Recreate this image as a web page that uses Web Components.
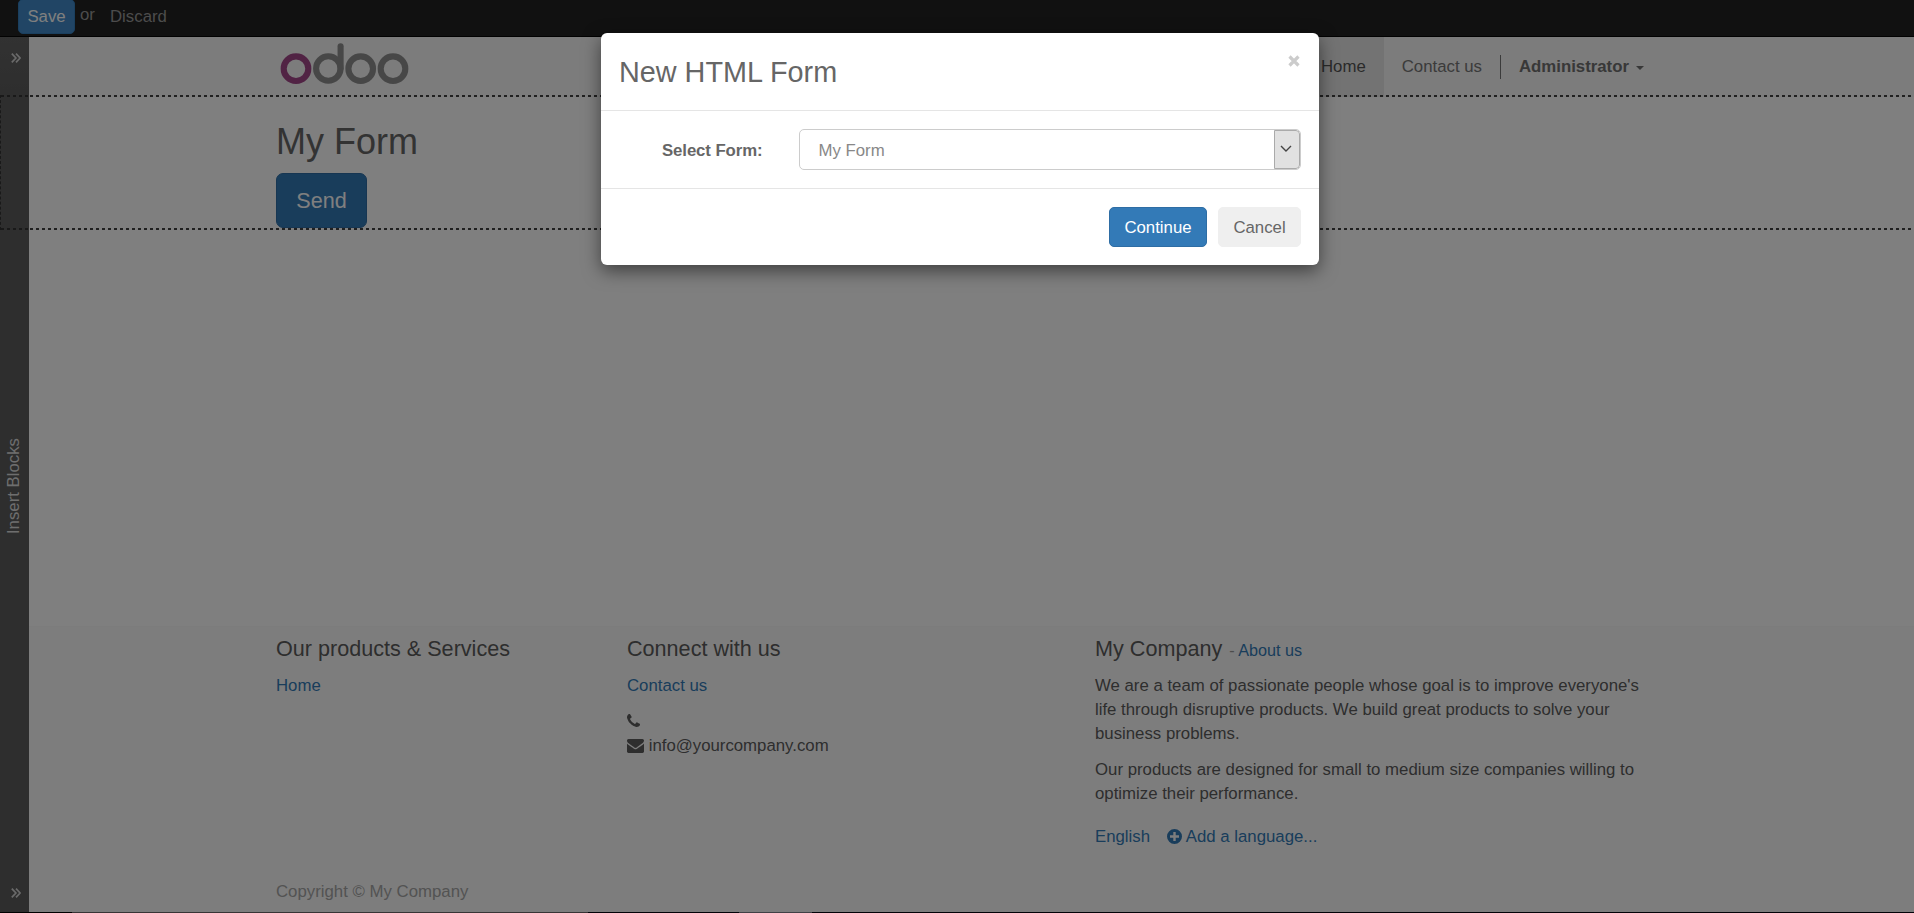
<!DOCTYPE html>
<html lang="en">
<head>
<meta charset="utf-8">
<title>My Form</title>
<style>
html,body{margin:0;height:913px;overflow:hidden}
body{font-family:"Liberation Sans",Arial,sans-serif;font-size:16.8px;line-height:24px;color:#666}
</style>
</head>
<body>
<site-page></site-page>
<script>
function define(name, html){
  const t=document.createElement('template');
  t.innerHTML=html;
  customElements.define(name,class extends HTMLElement{
    constructor(){super();this.attachShadow({mode:'open'}).append(t.content.cloneNode(true));}
  });
}

define('ui-button',`<style>
:host{display:inline-flex;box-sizing:border-box;align-items:center;justify-content:center;height:40px;border:1px solid #2e6da4;border-radius:5px;background:#337ab7;color:#fff;white-space:nowrap}
:host([kind=large]){width:91px;height:55px;border-radius:7px;font-size:21.6px}
:host([kind=save]){width:57px;height:35px;border-color:#357ebd;background:#428bca;color:#fff}
:host([kind=plain]){border-color:#efefef;background:#efefef;color:#666}
</style><slot></slot>`);

define('top-bar',`<style>
:host{display:flex;height:36px;background:#222;border-bottom:1px solid #040404;padding-left:18px;color:#999;align-items:flex-start;flex:none}
ui-button{margin-top:-1px}
.or{margin:3px 0 0 5px;width:30px}
.discard{margin-top:5px}
</style><ui-button kind="save">Save</ui-button><span class="or">or</span><span class="discard">Discard</span>`);

define('chevron-icon',`<style>:host{display:block;width:10px;height:10px}svg{display:block}</style>
<svg width="10" height="10" viewBox="0 0 10 10" fill="none" stroke="#d4d4d4" stroke-width="1.7"><path d="M.8.7 4.900 5 .8 9.300M5 .7 9.100 5 5 9.300"/></svg>`);

define('blocks-bar',`<style>
:host{display:flex;flex-direction:column;align-items:center;justify-content:space-between;box-sizing:border-box;width:29px;height:100%;background:linear-gradient(#646464,#5c5c5c 60px);padding:16px 0 14px 3px}
span{writing-mode:vertical-rl;transform:rotate(180deg);color:#ddd;font-size:16.8px;line-height:24px;margin:21px 5px 0 0}
</style><chevron-icon></chevron-icon><span>Insert Blocks</span><chevron-icon></chevron-icon>`);

define('odoo-logo',`<style>:host{display:block}svg{display:block}</style>
<svg width="132" height="46" viewBox="0 0 132 46" fill="none" stroke-width="6.1">
<circle cx="18" cy="27.700" r="12.300" stroke="#a24689"/>
<g stroke="#8f8f8f"><circle cx="50.300" cy="27.500" r="12.200"/><path d="M62.600 27.500V5.200" stroke-linecap="round"/>
<circle cx="82.700" cy="27.700" r="12.300"/><circle cx="115" cy="27.700" r="12.300"/></g></svg>`);

define('site-header',`<style>
:host{display:flex;height:60px;background:#f8f8f8;box-sizing:border-box;padding:0 270px 0 278px;justify-content:space-between;flex:none}
odoo-logo{margin-top:4px}
nav{display:flex;color:#777;height:60px;align-items:center}
.home{background:#e7e7e7;color:#555;height:100%;padding:0 18px;display:flex;align-items:center}
.contact{padding:0 18px}
.user{display:flex;align-items:center;border-left:1px solid #777;height:24px;padding-left:18px;color:#707070;font-weight:bold}
i{border:4px solid transparent;border-top-color:#707070;border-bottom:0;margin:2px 0 0 7px}
</style><odoo-logo></odoo-logo><nav><span class="home">Home</span><span class="contact">Contact us</span><span class="user">Administrator<i></i></span></nav>`);

define('form-section',`<style>
:host{display:block;box-sizing:border-box;height:135px;margin-top:-2px;padding:27px 0 0 276px;flex:none;
background:repeating-linear-gradient(90deg,#404040 0 3px,transparent 3px 6px) 0 0/100% 2px no-repeat,repeating-linear-gradient(90deg,#404040 0 3px,transparent 3px 6px) 0 100%/100% 2px no-repeat}
h1{font-size:36px;line-height:40px;margin:0 0 11px;color:#666;font-weight:normal}
ui-button{display:flex}
</style><h1>My Form</h1><ui-button kind="large">Send</ui-button>`);

define('fa-icon',`<style>:host{display:inline-block}svg{display:none;vertical-align:top}:host([name=phone]) .phone,:host([name=mail]) .mail,:host([name=plus]) .plus{display:block}</style>
<svg class="phone" width="13" height="13" viewBox="0 0 1408 1408" fill="currentColor"><path d="M1408 1112q0 27-10 70.500t-21 68.500q-21 50-122 106-94 51-186 51-27 0-52.500-3.500t-57.500-12.500-47.500-14.500-55.500-20.500-49-18q-98-35-175-83-128-79-264.500-215.500t-215.500-264.500q-48-77-83-175-3-9-18-49t-20.500-55.500-14.500-47.500-12.500-57.500-3.500-52.500q0-92 51-186 56-101 106-122 25-11 68.500-21t70.500-10q14 0 21 3 18 6 53 76 11 19 30 54t35 63.500 31 53.500q3 4 17.500 25t21.500 35.500 7 28.500q0 20-28.500 50t-62 55-62 53-28.500 46q0 9 5 22.500t8.500 20.500 14 24 11.500 19q76 137 174 235t235 174q2 1 19 11.500t24 14 20.500 8.500 22.500 5q18 0 46-28.500t53-62 55-62 50-28.500q14 0 28.500 7t35.500 21.500 25 17.500q25 15 53.500 31t63.500 35 54 30q70 35 76 53 3 7 3 21z"/></svg>
<svg class="mail" width="17" height="14" viewBox="0 0 1792 1408" preserveAspectRatio="none" fill="currentColor"><path d="M1792 454v794q0 66-47 113t-113 47H160q-66 0-113-47T0 1248V454q44 49 101 87 362 246 497 345 57 42 92.500 65.500t94.500 48 110 24.500h2q51 0 110-24.500t94.500-48T1194 886q170-123 498-345 57-39 100-87zM1792 160q0 79-49 151t-122 123q-376 261-468 325-10 7-42.500 30.500t-54 38-52 32.500-57.500 27-50 9h-2q-23 0-50-9t-57.500-27-52-32.500-54-38T639 759Q548 695 377 576.500T172 434q-62-42-117-115.500T0 182q0-78 41.500-130T160 0h1472q65 0 112.500 47t47.500 113z"/></svg>
<svg class="plus" width="15" height="15" viewBox="0 0 15 15"><path fill="currentColor" fill-rule="evenodd" d="M7.500 0a7.500 7.500 0 1 0 0 15 7.500 7.500 0 0 0 0-15ZM6.300 3h2.400v3.300H12v2.400H8.700V12H6.300V8.700H3V6.300h3.300Z"/></svg>`);

define('footer-column',`<style>:host{display:block;box-sizing:border-box}h4{font-size:21.6px;line-height:24px;font-weight:normal;margin:0 0 12px}:host([links]) h4{margin-bottom:13px}</style><h4><slot name="title"></slot></h4><slot></slot>`);

define('site-footer',`<style>
:host{display:block;box-sizing:border-box;height:287px;margin-top:auto;background:#fbfbfb;border-top:1px solid #f9f9f9;padding:10px 0 0 276px;color:#5c5c5c;flex:none}
.cols{display:grid;grid-template-columns:351px 468px 549px;height:243px}
p{margin:0 0 12px}
a{color:#337ab7}
small{font-size:16.2px;color:#999;margin-left:1px}
.gap{margin-top:19px}
.a{display:inline-block;margin-right:17px}
fa-icon{vertical-align:-2px}
fa-icon[name=phone]{vertical-align:0}
.copy{color:#a6a6a6}
</style><div class="cols">
<footer-column links><span slot="title">Our products &amp; Services</span><a>Home</a></footer-column>
<footer-column links><span slot="title">Connect with us</span><p><a>Contact us</a></p><div><fa-icon name="phone"></fa-icon><br><fa-icon name="mail"></fa-icon> info@yourcompany.com</div></footer-column>
<footer-column><span slot="title">My Company <small>- <a>About us</a></small></span>
<p>We are a team of passionate people whose goal is to improve everyone's<br>life through disruptive products. We build great products to solve your<br>business problems.</p>
<p>Our products are designed for small to medium size companies willing to<br>optimize their performance.</p>
<div class="gap"><a class="a">English</a><a><fa-icon name="plus"></fa-icon> Add a language...</a></div></footer-column>
</div><div class="copy">Copyright © My Company</div>`);

define('select-box',`<style>
:host{display:flex;box-sizing:border-box;width:502px;height:41px;border:1px solid #ccc;border-radius:5px;color:#888;justify-content:space-between;line-height:41px;padding-left:18.5px;overflow:hidden}
span{display:flex;box-sizing:border-box;width:26px;height:39px;background:#e1e1e1;border:1px solid #aaa;border-radius:0 4px 4px 0;align-items:center;justify-content:center}
svg{margin:0 2px 1px 0}
</style><slot></slot><span><svg width="12" height="8" viewBox="0 0 12 8" fill="none" stroke="#444" stroke-width="1.400"><path d="M1 1l5 5 5-5"/></svg></span>`);

define('form-dialog',`<style>
:host{display:block;box-sizing:border-box;width:718px;height:232px;background:#fff;border-radius:6px;box-shadow:0 6px 18px rgba(0,0,0,.5);color:#666}
header{display:flex;justify-content:space-between;box-sizing:border-box;height:78px;padding:19px 18px;border-bottom:1px solid #e5e5e5}
h3{font-size:28.8px;line-height:40px;font-weight:normal;margin:0}
.body{display:flex;box-sizing:border-box;height:78px;padding:18px 18px 18px 61px;justify-content:space-between;border-bottom:1px solid #e5e5e5}
b{line-height:43px;letter-spacing:-.1px}
.foot{display:flex;justify-content:flex-end;gap:11px;padding:18px}
.foot ui-button{padding-top:2px}
.c{width:98px}.n{width:83px}
header svg{margin:3px 1px 0 0}
</style><header><h3>New HTML Form</h3><svg width="12" height="12" viewBox="0 0 12 12" stroke="#ccc" stroke-width="3.200"><path d="M1.500 1.500l9 9M10.500 1.500l-9 9"/></svg></header>
<div class="body"><b>Select Form:</b><select-box>My Form</select-box></div>
<div class="foot"><ui-button class="c">Continue</ui-button><ui-button class="n" kind="plain">Cancel</ui-button></div>`);

define('site-page',`<style>
:host{display:flex;flex-direction:column;position:relative;width:1914px;height:913px;background:#fff;overflow:hidden}
blocks-bar{position:absolute;left:0;top:37px;height:875px}
.edge{position:absolute;left:0;top:95px;width:29px;height:135px;box-sizing:border-box;border:2px dashed #333;border-width:0 0 0 1px;background:repeating-linear-gradient(90deg,#333 0 3px,transparent 3px 6px) 0 0/100% 2px no-repeat,repeating-linear-gradient(90deg,#333 0 3px,transparent 3px 6px) 0 100%/100% 2px no-repeat}
.shade{position:absolute;inset:0;background:rgba(0,0,0,.5);display:flex;justify-content:center;align-items:flex-start;padding:33px 0 0 6px}
.line{position:absolute;left:0;bottom:0;width:100%;height:1px;background:linear-gradient(90deg,#000 72px,#373435 72px 588px,#020208 588px 739px,#404045 739px 812px,#020208 812px)}
</style><top-bar></top-bar><site-header></site-header><form-section></form-section><site-footer></site-footer><blocks-bar></blocks-bar><div class="edge"></div><div class="shade"><form-dialog></form-dialog></div><div class="line"></div>`);
</script>
</body>
</html>
